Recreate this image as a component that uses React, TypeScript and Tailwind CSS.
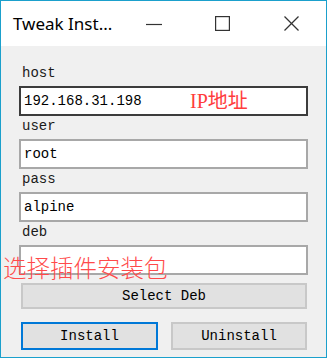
import React from "react";

const mono = { fontFamily: '"Liberation Mono", "DejaVu Sans Mono", monospace' };

function Field({ label, value, focused }: { label: string; value: string; focused?: boolean }) {
  return (
    <div className="flex flex-col">
      <div className="h-[23px] pl-[3px] text-[14px] leading-[20px] text-[#1a1a1a]">{label}</div>
      <div
        className={
          "h-[30px] w-[289px] bg-white flex items-center pl-[3px] text-[14px] text-black " +
          (focused ? "border-2 border-[#3c3c3c]" : "border-2 border-[#a8a8a8]")
        }
      >
        {value}
      </div>
    </div>
  );
}

export default function App() {
  return (
    <div className="w-[328px] h-[360px] bg-white">
      <div className="relative w-[327px] h-[358px] border border-[#1ba0cc] bg-[#f0f0f0] flex flex-col">
        <div className="h-[45px] bg-white flex items-center shrink-0">
          <div
            className="flex-1 pl-[12px] text-[17px] leading-[22px] text-black"
            style={{ fontFamily: '"Noto Sans", "Open Sans", sans-serif' }}
          >
            Tweak Inst...
          </div>
          <div className="w-[69px] h-[45px] flex items-center justify-center">
            <svg width="16" height="16" viewBox="0 0 16 16">
              <line x1="0" y1="8.5" x2="16" y2="8.5" stroke="#333" strokeWidth="1.2" />
            </svg>
          </div>
          <div className="w-[69px] h-[45px] flex items-center justify-center">
            <svg width="15" height="15" viewBox="0 0 15 15">
              <rect x="0.6" y="0.6" width="13.8" height="13.8" fill="none" stroke="#333" strokeWidth="1.2" />
            </svg>
          </div>
          <div className="w-[69px] h-[45px] flex items-center justify-center">
            <svg width="15" height="15" viewBox="0 0 15 15">
              <line x1="0.5" y1="0.5" x2="14.5" y2="14.5" stroke="#333" strokeWidth="1.2" />
              <line x1="14.5" y1="0.5" x2="0.5" y2="14.5" stroke="#333" strokeWidth="1.2" />
            </svg>
          </div>
        </div>
        <div className="flex flex-col pl-[18px] pt-[17px]" style={mono}>
          <Field label="host" value="192.168.31.198" focused />
          <Field label="user" value="root" />
          <Field label="pass" value="alpine" />
          <Field label="deb" value="" />
          <button className="mt-[8px] ml-[2px] w-[286px] h-[26px] bg-[#e1e1e1] border-2 border-[#c8c8c8] text-[14px] text-black flex items-center justify-center">
            Select Deb
          </button>
          <div className="mt-[13px] ml-[2px] flex gap-[13px]">
            <button className="w-[137px] h-[28px] bg-[#e1e1e1] border-2 border-[#0078d7] text-[14px] text-black flex items-center justify-center">
              Install
            </button>
            <button className="w-[136px] h-[28px] bg-[#e1e1e1] border-2 border-[#c8c8c8] text-[14px] text-black flex items-center justify-center">
              Uninstall
            </button>
          </div>
        </div>
        <div
          className="absolute left-[189px] top-[86px] text-[20px] leading-[28px] text-[#ff3c3c]"
          style={{ fontFamily: '"Liberation Serif", "Noto Sans CJK SC", serif' }}
        >
          IP地址
        </div>
        <div
          className="absolute left-[2px] top-[251px] text-[23.5px] leading-[30px] text-[#ff4a4a]"
          style={{ fontFamily: '"Noto Sans CJK SC", sans-serif', fontWeight: 300 }}
        >
          选择插件安装包
        </div>
      </div>
    </div>
  );
}
